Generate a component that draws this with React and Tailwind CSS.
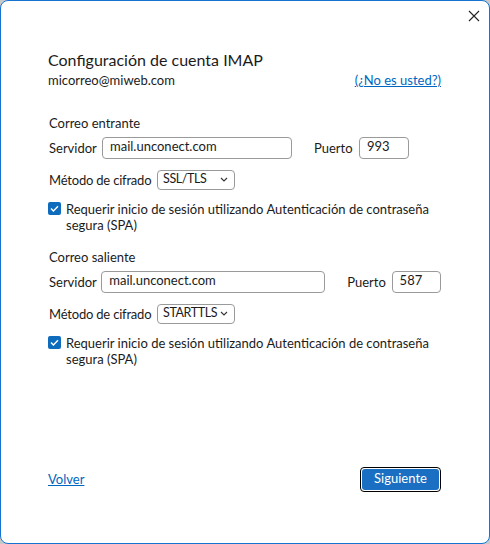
import React from "react";

const F = { fontFamily: 'Lato, "Noto Sans", sans-serif' };

function Chevron() {
  return (
    <svg width="8" height="5" viewBox="0 0 8 5" className="block shrink-0">
      <path d="M1 1 L4 4 L7 1" fill="none" stroke="#333" strokeWidth="1.1" />
    </svg>
  );
}

function Check() {
  return (
    <div className="w-[13px] h-[13px] rounded-[2px] bg-[#0f6cbd] flex items-center justify-center shrink-0 mt-[1px]">
      <svg width="9" height="7" viewBox="0 0 9 7">
        <path d="M1 3.6 L3.4 6 L8 1.2" fill="none" stroke="white" strokeWidth="1.4" />
      </svg>
    </div>
  );
}

function Section({ title, serverW, gapPort, port, method, top }) {
  return (
    <div className={top}>
      <div className="h-[20px] flex items-center pl-[1px]">{title}</div>
      <div className="flex items-center mt-[3px] h-[22px]">
        <div className="w-[54px] pl-[1px] pt-[2px]">Servidor</div>
        <div
          className="h-[22px] border border-[#9a9a9a] rounded-[4px] flex items-center pl-[7px] pb-[2px] shrink-0"
          style={{ width: serverW }}
        >
          mail.unconect.com
        </div>
        <div className="shrink-0" style={{ width: gapPort }} />
        <div className="w-[45px] pt-[2px]">Puerto</div>
        <div className="w-[50px] h-[22px] border border-[#9a9a9a] rounded-[4px] flex items-center pl-[7px] pb-[2px]">
          {port}
        </div>
      </div>
      <div className="flex items-center h-[20px] mt-[11px]">
        <div className="w-[109px] pl-[1px] whitespace-nowrap pt-[2px] tracking-[-0.2px]">Método de cifrado</div>
        <div className="w-[78px] h-[20px] border border-[#9a9a9a] rounded-[4px] flex items-center justify-between pl-[5px] pr-[6px] pb-[1px] text-[12.5px] tracking-[-0.4px]">
          <span className="whitespace-nowrap">{method}</span>
          <Chevron />
        </div>
      </div>
      <div className="flex mt-[11px] gap-[5px]">
        <Check />
        <div className="leading-[16px]">
          Requerir inicio de sesión utilizando Autenticación de contraseña
          <br />
          segura (SPA)
        </div>
      </div>
    </div>
  );
}

export default function App() {
  return (
    <div className="w-[490px] h-[544px] bg-[#c9c9c9]" style={F}>
      <div className="w-full h-full bg-white border border-[#1674d1] rounded-[8px] flex flex-col text-[#1b1b1b] text-[13px]">
        <div className="flex justify-end pt-[9px] pr-[9px] h-[30px]">
          <svg width="12" height="12" viewBox="0 0 12 12">
            <path d="M1 1 L11 11 M11 1 L1 11" stroke="#222" strokeWidth="1.1" />
          </svg>
        </div>
        <div className="pl-[47px] pr-[48px]">
          <div className="h-[22px] mt-[18px] flex items-center text-[16px]">
            Configuración de cuenta IMAP
          </div>
          <div className="h-[20px] flex items-center justify-between">
            <span>micorreo@miweb.com</span>
            <a className="text-[#0067c0] underline">(¿No es usted?)</a>
          </div>
          <Section
            top="mt-[23px]"
            title="Correo entrante"
            serverW={190}
            gapPort={22}
            port="993"
            method="SSL/TLS"
          />
          <Section
            top="mt-[15px]"
            title="Correo saliente"
            serverW={224}
            gapPort={22}
            port="587"
            method="STARTTLS"
          />
        </div>
        <div className="flex-1" />
        <div className="pl-[47px] pr-[48px] flex items-center justify-between mb-[51px]">
          <a className="text-[#0067c0] underline">Volver</a>
          <button className="border border-black rounded-[4px] p-[1px] bg-white">
            <span className="block w-[77px] h-[21px] bg-[#1a6fc2] rounded-[3px] text-white flex items-center justify-center pb-[1px]">
              Siguiente
            </span>
          </button>
        </div>
      </div>
    </div>
  );
}
